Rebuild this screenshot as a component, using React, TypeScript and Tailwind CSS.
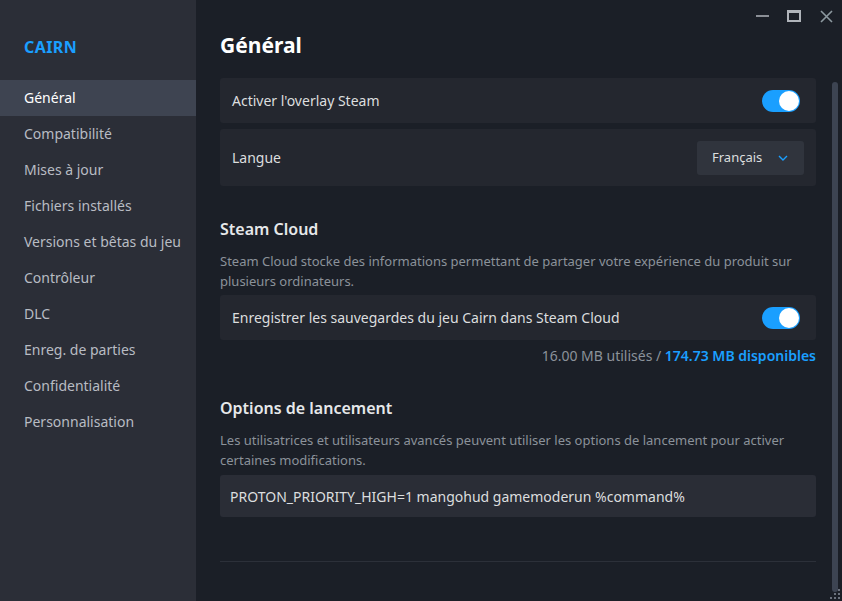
import React from "react";

const nav = [
  "Général",
  "Compatibilité",
  "Mises à jour",
  "Fichiers installés",
  "Versions et bêtas du jeu",
  "Contrôleur",
  "DLC",
  "Enreg. de parties",
  "Confidentialité",
  "Personnalisation",
];

function Toggle() {
  return (
    <div className="w-[38px] h-[22px] rounded-full bg-[#1a9fff] flex items-center justify-end px-[1px]">
      <div className="w-[20px] h-[20px] rounded-full bg-white" />
    </div>
  );
}

export default function App() {
  return (
    <div
      className="w-[842px] h-[601px] flex bg-[#1b1f27] overflow-hidden relative"
      style={{ fontFamily: '"Noto Sans", sans-serif' }}
    >
      <aside className="w-[196px] shrink-0 bg-[#2b2e37] flex flex-col">
        <div className="h-[80px] flex items-center pl-6 pt-[14px] text-[#1a9fff] font-bold text-[16px] tracking-wide">
          CAIRN
        </div>
        <nav className="flex flex-col">
          {nav.map((n, i) => (
            <div
              key={n}
              className={
                "h-[36px] flex items-center pl-6 pb-[1px] text-[14px] " +
                (i === 0 ? "bg-[#3e4451] text-white" : "text-[#b8bcc3]")
              }
            >
              {n}
            </div>
          ))}
        </nav>
      </aside>

      <main className="flex-1 flex flex-col relative">
        <div className="absolute top-0 right-0 flex items-center h-[32px]">
          <div className="w-[32px] h-[32px] flex items-center justify-center">
            <div className="w-[13px] h-[2px] bg-[#8b8f96]" />
          </div>
          <div className="w-[32px] h-[32px] flex items-center justify-center">
            <div className="w-[14px] h-[12px] border-2 border-t-[3px] border-[#b0b4ba]" />
          </div>
          <div className="w-[32px] h-[32px] flex items-center justify-center">
            <svg width="13" height="13" viewBox="0 0 13 13">
              <path d="M1 1L12 12M12 1L1 12" stroke="#8d99a0" strokeWidth="1.6" />
            </svg>
          </div>
        </div>

        <div className="pl-6 pr-[26px] flex flex-col">
          <h1 className="text-white font-bold text-[21px] h-[78px] pt-[30px] leading-[30px]">
            Général
          </h1>

          <div className="h-[45px] bg-[#24272f] rounded-[3px] flex items-center justify-between pl-3 pr-4 text-[14px] text-[#dcdedf]">
            <span>Activer l'overlay Steam</span>
            <Toggle />
          </div>
          <div className="mt-[6px] h-[57px] bg-[#24272f] rounded-[3px] flex items-center justify-between pl-3 pr-3 text-[14px] text-[#dcdedf]">
            <span>Langue</span>
            <div className="w-[107px] h-[34px] bg-[#30343d] rounded-[3px] flex items-center justify-between pl-[15px] pr-[16px] text-[13px] text-[#dcdedf]">
              <span>Français</span>
              <svg width="10" height="6" viewBox="0 0 10 6">
                <path d="M1 1L5 5L9 1" stroke="#1a9fff" strokeWidth="1.4" fill="none" />
              </svg>
            </div>
          </div>

          <h2 className="mt-[31px] text-[16px] font-semibold text-[#e6e8ea] leading-[24px]">
            Steam Cloud
          </h2>
          <p className="mt-[10px] text-[13px] text-[#8b929a] leading-[20px]">
            Steam Cloud stocke des informations permettant de partager votre expérience du produit sur plusieurs ordinateurs.
          </p>
          <div className="mt-[4px] h-[45px] bg-[#24272f] rounded-[3px] flex items-center justify-between pl-3 pr-4 text-[14px] text-[#dcdedf]">
            <span>Enregistrer les sauvegardes du jeu Cairn dans Steam Cloud</span>
            <Toggle />
          </div>
          <div className="mt-[5px] text-right text-[14px] leading-[22px] text-[#8b929a]">
            16.00 MB utilisés / <span className="text-[#1a9fff] font-semibold">174.73 MB disponibles</span>
          </div>

          <h2 className="mt-[29px] text-[16px] font-semibold text-[#e6e8ea] leading-[24px]">
            Options de lancement
          </h2>
          <p className="mt-[10px] text-[13px] text-[#8b929a] leading-[20px]">
            Les utilisatrices et utilisateurs avancés peuvent utiliser les options de lancement pour activer certaines modifications.
          </p>
          <div className="mt-[5px] h-[42px] bg-[#2a2d36] rounded-[3px] flex items-center px-[10px] text-[14px] text-[#dcdedf]">
            PROTON_PRIORITY_HIGH=1 mangohud gamemoderun %command%
          </div>
          <div className="mt-[44px] h-px bg-[#2c3039]" />
        </div>

        <div className="absolute right-[4px] top-[82px] w-[6px] h-[510px] rounded-full bg-[#3d4452]" />
        <div className="absolute right-0 bottom-0 w-[14px] h-[14px]">
          <svg width="14" height="14" viewBox="0 0 14 14">
            <rect x="10" y="2" width="2" height="2" fill="#6b717c" />
            <rect x="6" y="6" width="2" height="2" fill="#6b717c" />
            <rect x="10" y="6" width="2" height="2" fill="#6b717c" />
            <rect x="2" y="10" width="2" height="2" fill="#6b717c" />
            <rect x="6" y="10" width="2" height="2" fill="#6b717c" />
            <rect x="10" y="10" width="2" height="2" fill="#6b717c" />
          </svg>
        </div>
      </main>
    </div>
  );
}
